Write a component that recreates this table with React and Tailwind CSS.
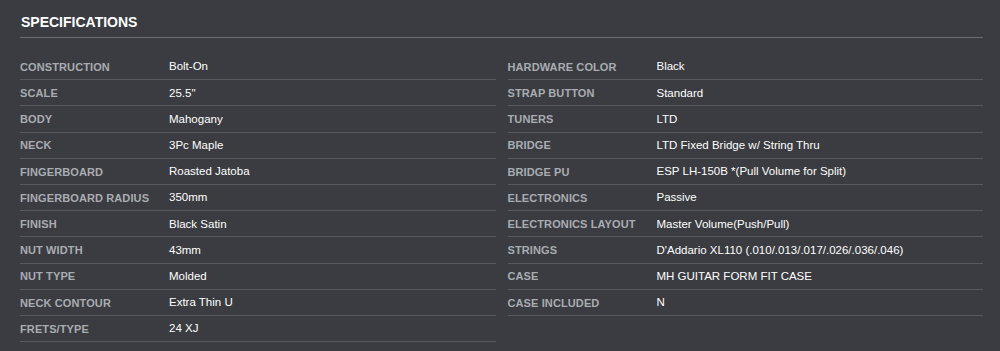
import React from "react";

const left = [
  ["CONSTRUCTION", "Bolt-On"],
  ["SCALE", "25.5\""],
  ["BODY", "Mahogany"],
  ["NECK", "3Pc Maple"],
  ["FINGERBOARD", "Roasted Jatoba"],
  ["FINGERBOARD RADIUS", "350mm"],
  ["FINISH", "Black Satin"],
  ["NUT WIDTH", "43mm"],
  ["NUT TYPE", "Molded"],
  ["NECK CONTOUR", "Extra Thin U"],
  ["FRETS/TYPE", "24 XJ"],
];

const right = [
  ["HARDWARE COLOR", "Black"],
  ["STRAP BUTTON", "Standard"],
  ["TUNERS", "LTD"],
  ["BRIDGE", "LTD Fixed Bridge w/ String Thru"],
  ["BRIDGE PU", "ESP LH-150B *(Pull Volume for Split)"],
  ["ELECTRONICS", "Passive"],
  ["ELECTRONICS LAYOUT", "Master Volume(Push/Pull)"],
  ["STRINGS", "D'Addario XL110 (.010/.013/.017/.026/.036/.046)"],
  ["CASE", "MH GUITAR FORM FIT CASE"],
  ["CASE INCLUDED", "N"],
];

function Col({ rows }) {
  return (
    <div className="flex flex-col">
      {rows.map(([k, v]) => (
        <div key={k} className="flex h-[26.2px] items-center border-b border-[#55585d] pt-[1px]">
          <div className="w-[149px] shrink-0 text-[11px] font-bold tracking-[0.01em] text-[#a9acb1]">{k}</div>
          <div className="text-[11.5px] text-white">{v}</div>
        </div>
      ))}
    </div>
  );
}

export default function App() {
  return (
    <div className="h-[351px] w-[1000px] bg-[#3a3c41] pl-[20px] pr-[17px] pt-[12px]" style={{ fontFamily: '"Liberation Sans", Arial, sans-serif' }}>
      <div className="border-b border-[#6a6d72] pb-[4px] pl-[1px] text-[14px] font-bold text-white">SPECIFICATIONS</div>
      <div className="mt-[16px] grid grid-cols-2 gap-x-[12px]">
        <Col rows={left} />
        <Col rows={right} />
      </div>
    </div>
  );
}
